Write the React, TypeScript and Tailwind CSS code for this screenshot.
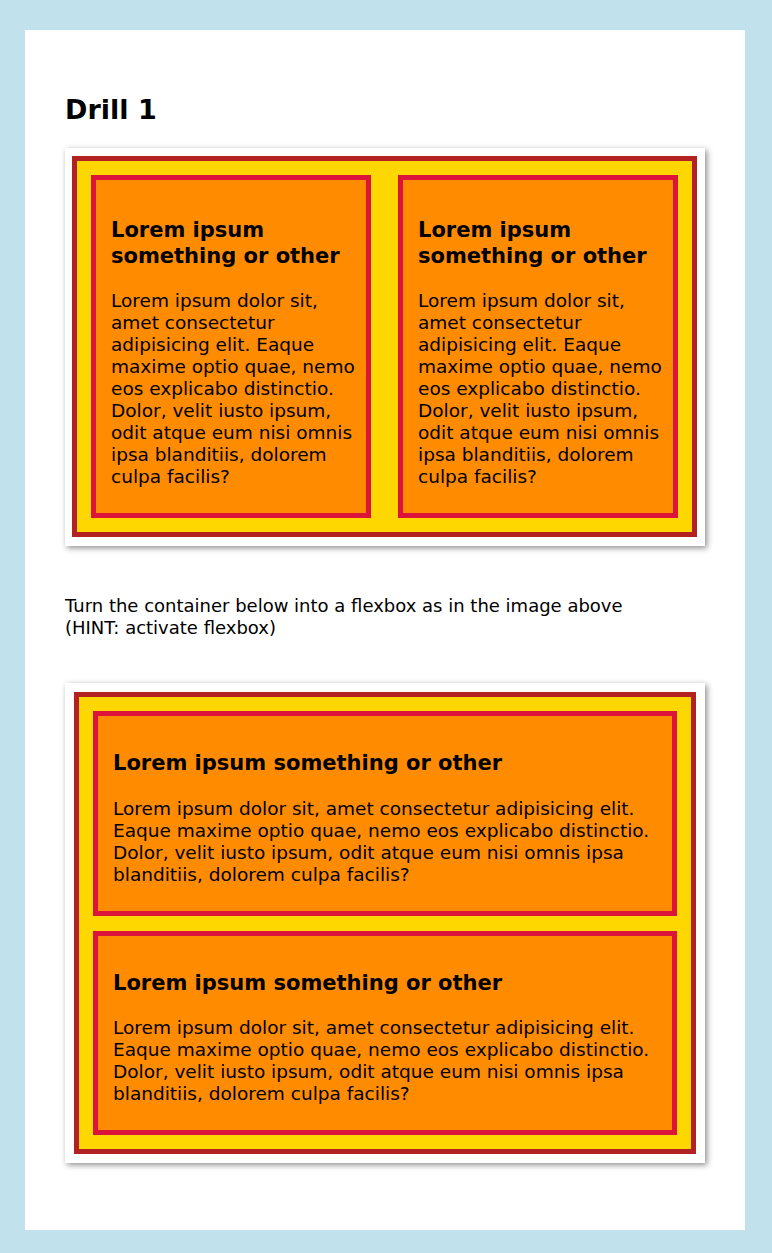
import React from 'react'

const text =
  'Lorem ipsum dolor sit, amet consectetur adipisicing elit. Eaque maxime optio quae, nemo eos explicabo distinctio. Dolor, velit iusto ipsum, odit atque eum nisi omnis ipsa blanditiis, dolorem culpa facilis?'

function Item({ className = '' }: { className?: string }) {
  return (
    <div className={`border-[5px] border-[#dc143c] bg-[#ff8c00] pl-[15px] pr-[8px] pb-[25px] ${className}`}>
      <h2 className="text-[21px] font-bold leading-[25.6px]">Lorem ipsum something or other</h2>
      <p className="mt-[21px] text-[18.5px] leading-[22px]">{text}</p>
    </div>
  )
}

export default function App() {
  return (
    <div className="min-h-[1253px] bg-[#c1e1ed] pt-[30px] pb-[22px] font-['DejaVu_Sans',sans-serif] text-black">
      <div className="ml-[25px] w-[720px] bg-white px-[40px] pt-[64px] pb-[67px]">
        <h1 className="text-[27px] font-bold leading-[32px]">Drill 1</h1>

        {/* target layout */}
        <div className="mt-[22px] bg-white pt-[8px] pb-[9px] pl-[7px] pr-[8px] shadow-[2px_2px_6px_rgba(0,0,0,0.45)]">
          <div className="flex gap-[27px] border-[5px] border-[#b22222] bg-[#ffd700] p-[14px]">
            <Item className="flex-1 pt-[38px]" />
            <Item className="flex-1 pt-[38px]" />
          </div>
        </div>

        <p className="mt-[49px] text-[18px] leading-[22px]">
          Turn the container below into a flexbox as in the image above
          <br />
          (HINT: activate flexbox)
        </p>

        <div className="mt-[44px] bg-white p-[9px] shadow-[2px_2px_6px_rgba(0,0,0,0.45)]">
          <div className="border-[5px] border-[#b22222] bg-[#ffd700] p-[14px]">
            <Item className="pt-[35px]" />
            <Item className="mt-[15px] pt-[35px]" />
          </div>
        </div>
      </div>
    </div>
  )
}
